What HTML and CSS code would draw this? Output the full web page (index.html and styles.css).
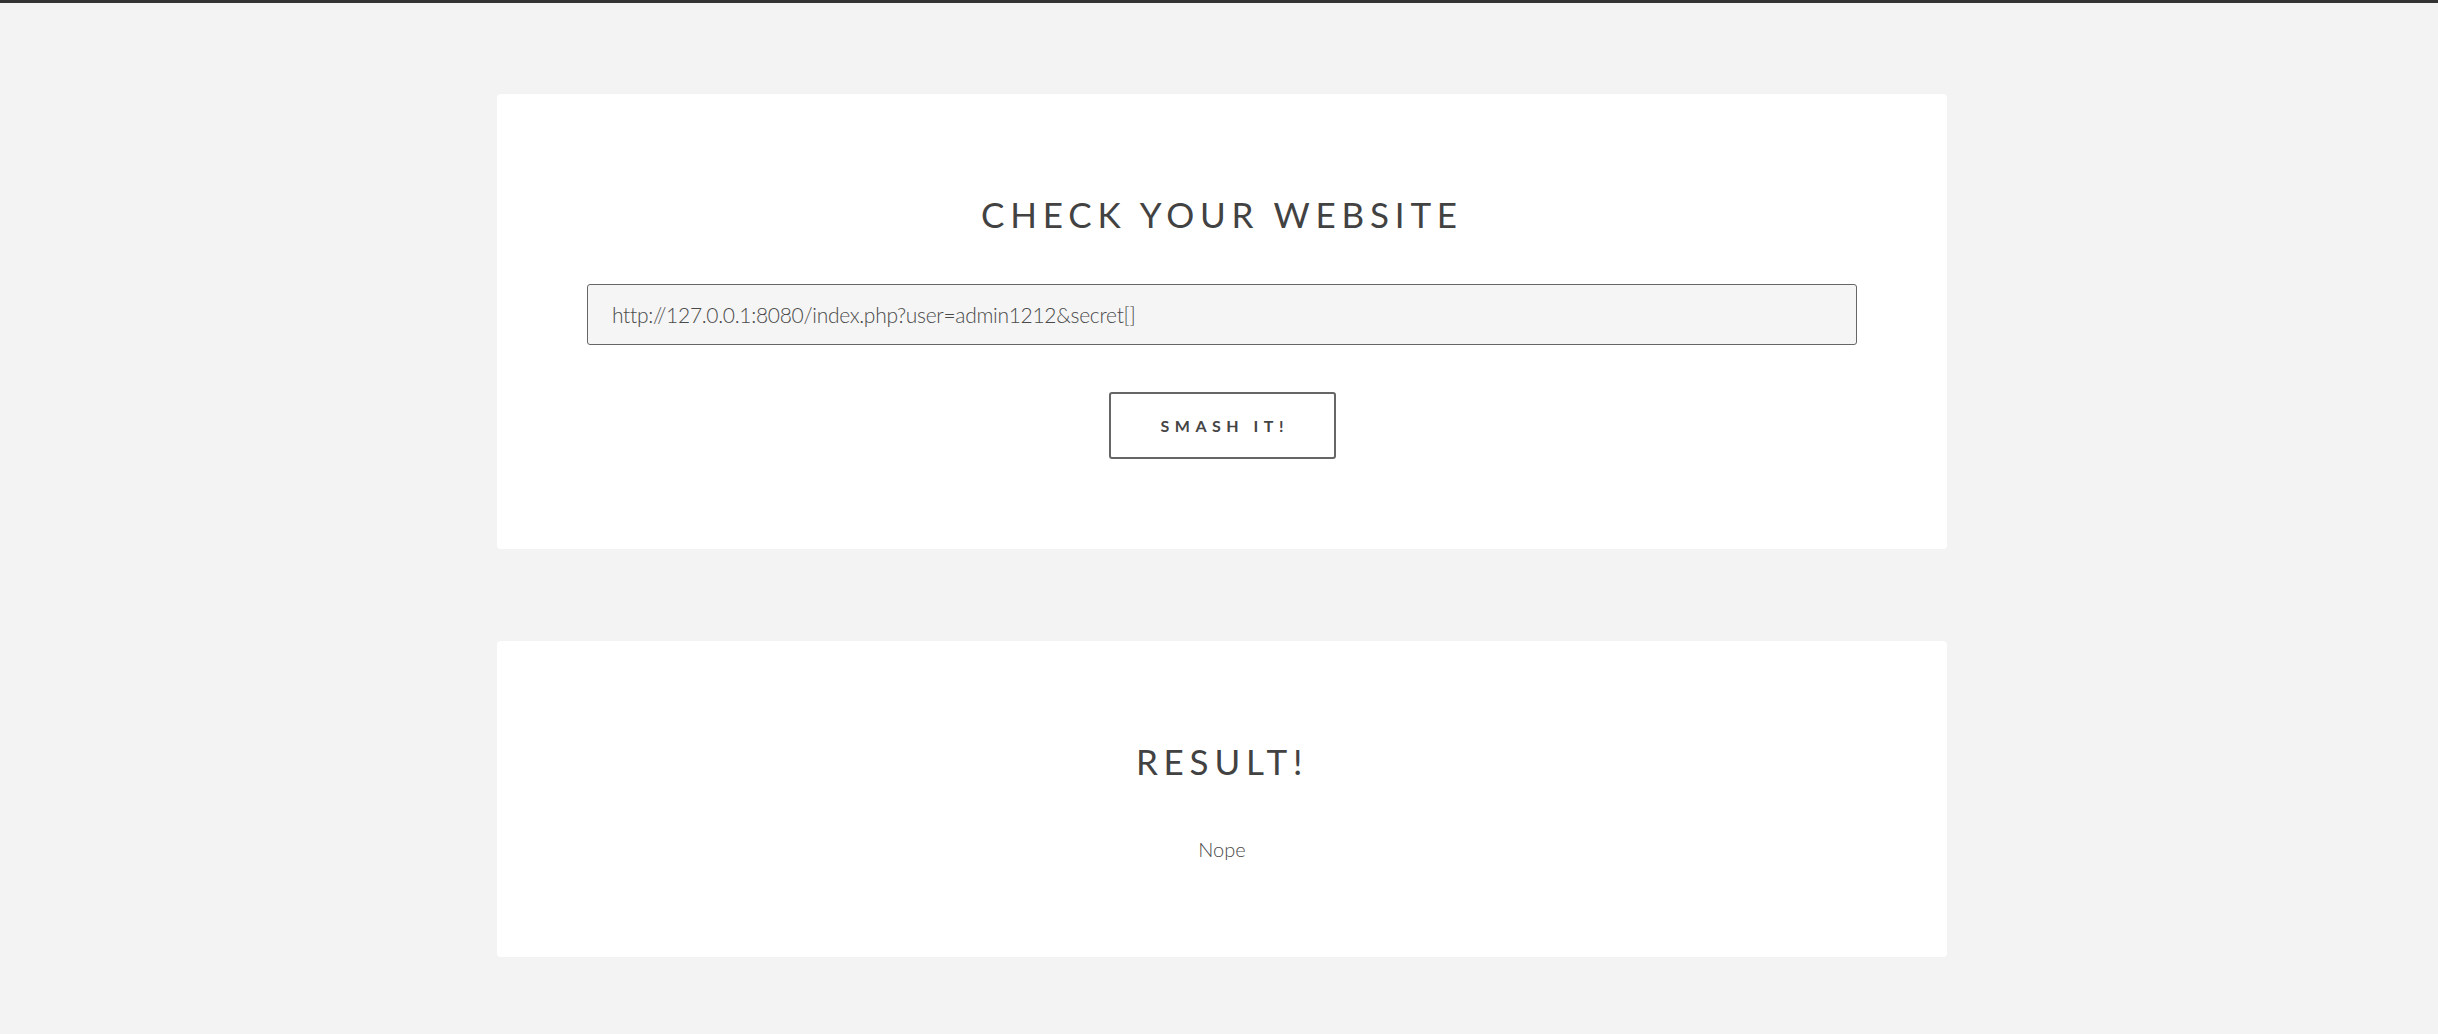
FILE: index.html
```html
<!DOCTYPE html>
<html lang="en">
<head>
<meta charset="utf-8">
<title>Check your website</title>
<link rel="stylesheet" href="styles.css">
</head>
<body>
<main class="page">
  <section class="card card-check">
    <h1 class="title">CHECK YOUR WEBSITE</h1>
    <form class="form">
      <input class="url" type="text" value="http://127.0.0.1:8080/index.php?user=admin1212&amp;secret[]">
      <button class="btn" type="button">SMASH IT!</button>
    </form>
  </section>
  <section class="card card-result">
    <h2 class="title">RESULT!</h2>
    <p class="result">Nope</p>
  </section>
</main>
</body>
</html>
```

FILE: styles.css
```css
html, body {
  margin: 0;
  padding: 0;
}
body {
  background: #f3f3f3;
  border-top: 3px solid #333;
  font-family: Lato, "Liberation Sans", sans-serif;
  color: #444;
  min-height: 1031px;
}
.page {
  width: 1450px;
  margin: 0 auto;
  padding: 91px 0 0 6px;
  display: flex;
  flex-direction: column;
  gap: 92px;
}
.card {
  background: #fff;
  border-radius: 4px;
  padding: 99px 90px 0;
  box-sizing: border-box;
  display: flex;
  flex-direction: column;
  align-items: center;
}
.card-check {
  height: 455px;
}
.card-result {
  height: 316px;
}
.title {
  margin: 0;
  font-size: 35px;
  line-height: 42px;
  font-weight: 400;
  letter-spacing: 5.8px;
  color: #424242;
}
.form {
  width: 100%;
  display: flex;
  flex-direction: column;
  align-items: center;
  margin-top: 49px;
}
.url {
  width: 100%;
  box-sizing: border-box;
  height: 61px;
  border: 1px solid #666;
  border-radius: 3px;
  background: #f5f5f5;
  padding: 0 24px;
  font-family: Lato, "Liberation Sans", sans-serif;
  font-weight: 300;
  font-size: 21px;
  letter-spacing: -0.3px;
  color: #4a4a4a;
  outline: none;
}
.btn {
  margin-top: 47px;
  width: 227px;
  height: 67px;
  box-sizing: border-box;
  border: 2px solid #666;
  border-radius: 3px;
  background: #fff;
  font-family: Lato, "Liberation Sans", sans-serif;
  font-weight: 700;
  font-size: 16px;
  letter-spacing: 5.5px;
  padding: 0 0 0 5.5px;
  color: #444;
}
.result {
  margin: 55px 0 0;
  font-size: 20px;
  line-height: 24px;
  font-weight: 300;
  color: #4a4a4a;
}
```
